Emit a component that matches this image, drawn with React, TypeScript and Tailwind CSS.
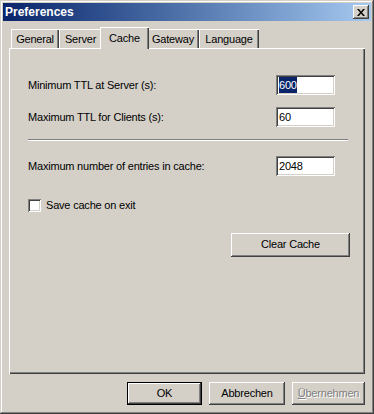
import React from "react";

const raised =
  "shadow-[inset_-1px_-1px_#404040,inset_1px_1px_#ffffff,inset_-2px_-2px_#808080]";
const sunken =
  "shadow-[inset_1px_1px_#808080,inset_-1px_-1px_#ffffff,inset_2px_2px_#404040,inset_-2px_-2px_#d4d0c8]";

function Field({ value, selected }: { value: string; selected?: boolean }) {
  return (
    <div
      className={`flex h-[20px] w-[59px] items-center bg-white pl-[3px] text-black ${sunken}`}
    >
      <span className={selected ? "bg-[#0a246a] text-white" : ""}>{value}</span>
    </div>
  );
}

function Tab({
  label,
  width,
  active,
}: {
  label: string;
  width: string;
  active?: boolean;
}) {
  if (active) {
    return (
      <div
        className={`relative z-10 -mx-[2px] -mb-px flex h-[22px] items-start justify-center bg-[#d4d0c8] pt-[3px] ${width} shadow-[inset_1px_1px_#ffffff,inset_-1px_0_#404040,inset_-2px_0_#808080]`}
      >
        {label}
      </div>
    );
  }
  return (
    <div
      className={`flex h-[19px] items-center justify-center pt-[2px] ${width} shadow-[inset_1px_1px_#ffffff,inset_-1px_0_#404040,inset_-2px_0_#808080]`}
    >
      {label}
    </div>
  );
}

export default function App() {
  return (
    <div
      className="flex h-[414px] w-[374px] flex-col bg-[#d4d0c8] p-[3px] text-[11px] tracking-[-0.2px] text-black shadow-[inset_-1px_-1px_#404040,inset_1px_1px_#d4d0c8,inset_-2px_-2px_#808080,inset_2px_2px_#ffffff]"
      style={{ fontFamily: '"Liberation Sans", Arial, sans-serif' }}
    >
      {/* Title bar */}
      <div className="flex h-[18px] items-center justify-between bg-gradient-to-r from-[#0a246a] to-[#a6caf0] pl-[2px] pr-[2px]">
        <span className="text-[12px] font-bold tracking-[0px] text-white">
          Preferences
        </span>
        <div
          className={`flex h-[14px] w-[16px] items-center justify-center bg-[#d4d0c8] ${raised}`}
        >
          <svg width="8" height="7" viewBox="0 0 8 7">
            <path
              d="M0 0h2l2 2.5L6 0h2L5 3.5 8 7H6L4 4.5 2 7H0l3-3.5z"
              fill="#000"
            />
          </svg>
        </div>
      </div>

      {/* Body */}
      <div className="flex flex-1 flex-col px-[6px] pt-[6px]">
        {/* Tabs */}
        <div className="flex h-[21px] items-end pl-[2px]">
          <Tab label="General" width="w-[48px]" />
          <Tab label="Server" width="w-[43px]" />
          <Tab label="Cache" width="w-[49px]" active />
          <Tab label="Gateway" width="w-[52px]" />
          <Tab label="Language" width="w-[60px]" />
        </div>

        {/* Panel */}
        <div className="flex h-[326px] flex-col pl-[19px] pr-[15px] pt-[27px] shadow-[inset_1px_1px_#ffffff,inset_-1px_-1px_#404040,inset_-2px_-2px_#808080]">
          <div className="flex h-[20px] items-center justify-between pr-[15px]">
            <span>Minimum TTL at Server (s):</span>
            <Field value="600" selected />
          </div>
          <div className="mt-[12px] flex h-[20px] items-center justify-between pr-[15px]">
            <span>Maximum TTL for Clients (s):</span>
            <Field value="60" />
          </div>

          <div className="mt-[12px] mr-[2px] h-[2px] border-t border-b border-t-[#808080] border-b-white" />

          <div className="mt-[15px] flex h-[20px] items-center justify-between pr-[15px]">
            <span>Maximum number of entries in cache:</span>
            <Field value="2048" />
          </div>

          <div className="mt-[21px] flex items-center gap-[5px]">
            <div className={`h-[13px] w-[13px] bg-white ${sunken}`} />
            <span>Save cache on exit</span>
          </div>

          <div className="mt-[19px] flex justify-end">
            <button
              className={`flex h-[24px] w-[119px] items-center justify-center bg-[#d4d0c8] ${raised}`}
            >
              Clear Cache
            </button>
          </div>
        </div>

        {/* Dialog buttons */}
        <div className="mt-[8px] flex justify-end gap-[7px]">
          <button className="flex h-[23px] w-[75px] items-center justify-center border border-black bg-[#d4d0c8] shadow-[inset_-1px_-1px_#404040,inset_1px_1px_#ffffff,inset_-2px_-2px_#808080]">
            OK
          </button>
          <button
            className={`flex h-[23px] w-[76px] items-center justify-center bg-[#d4d0c8] ${raised}`}
          >
            Abbrechen
          </button>
          <button
            className={`flex h-[23px] w-[73px] items-center justify-center bg-[#d4d0c8] text-[#808080] [text-shadow:1px_1px_#ffffff] ${raised}`}
          >
            <span>
              <span className="underline">Ü</span>bernehmen
            </span>
          </button>
        </div>
      </div>
    </div>
  );
}
